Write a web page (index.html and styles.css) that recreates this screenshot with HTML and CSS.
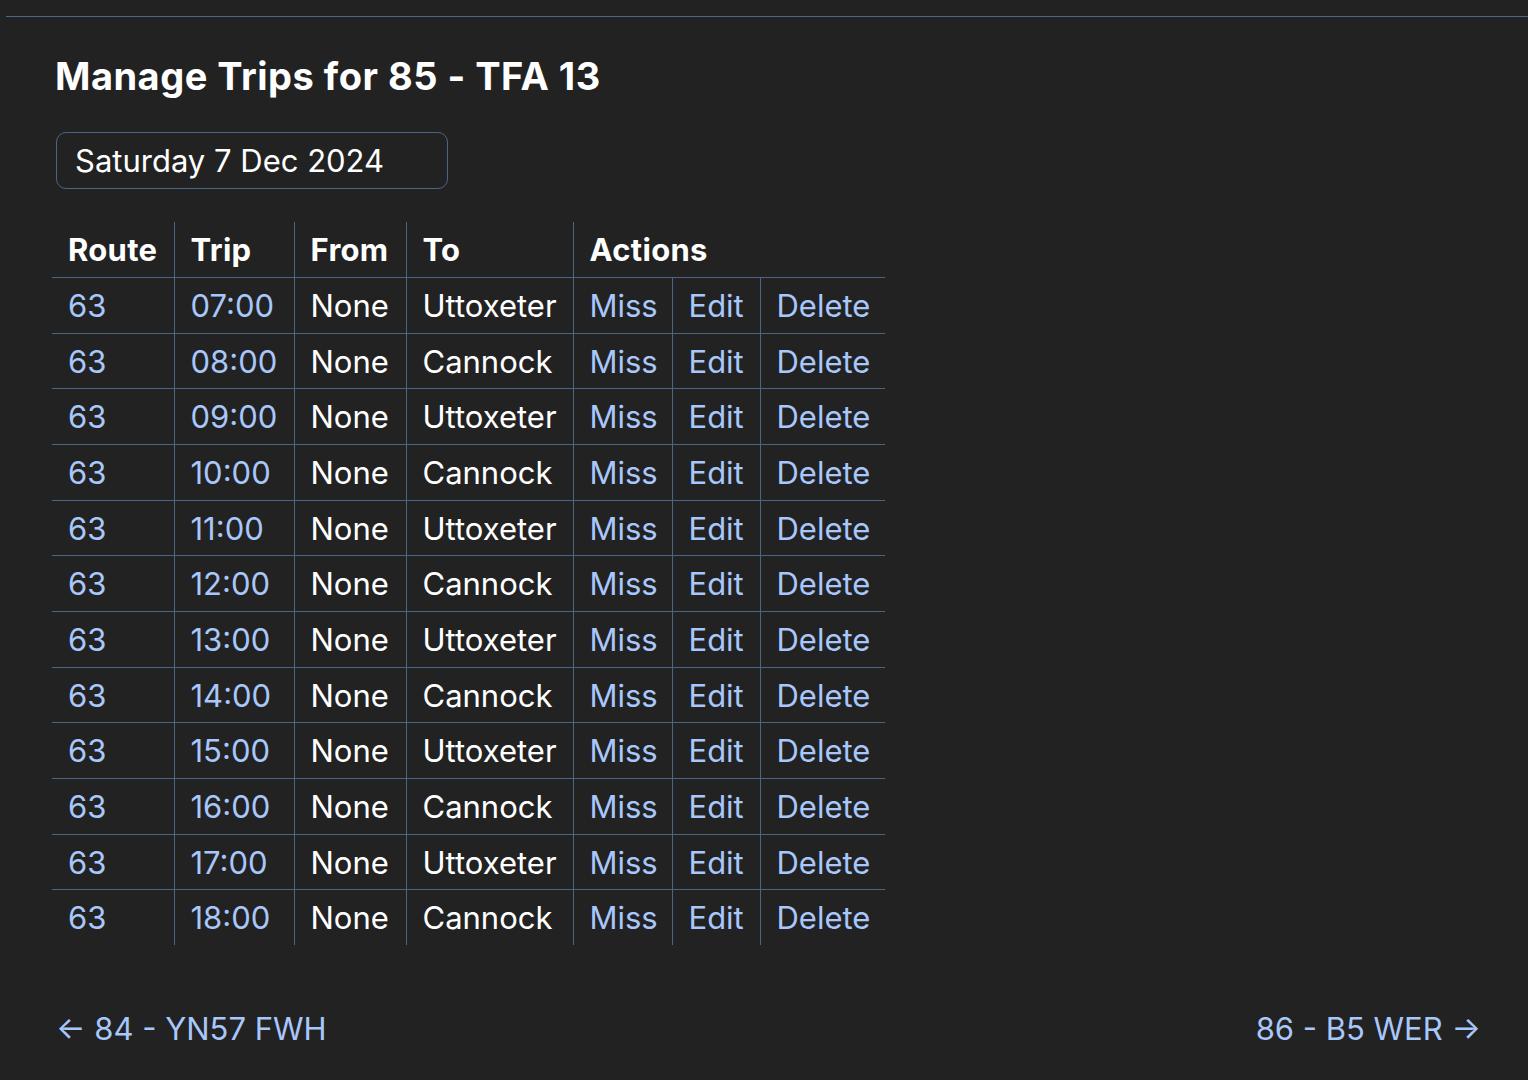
FILE: index.html
```html
<!DOCTYPE html>
<html lang="en">
<head>
<meta charset="utf-8">
<title>Manage Trips</title>
<link rel="stylesheet" href="styles.css">
</head>
<body>
<div class="page">
  <main class="content">
    <h1 class="title">Manage Trips for 85 - TFA 13</h1>
    <div class="date-field">Saturday 7 Dec 2024</div>
    <table class="trips">
      <colgroup>
        <col class="c-route"><col class="c-trip"><col class="c-from"><col class="c-to"><col class="c-miss"><col class="c-edit"><col class="c-delete">
      </colgroup>
      <thead>
        <tr><th>Route</th><th>Trip</th><th>From</th><th>To</th><th colspan="3">Actions</th></tr>
      </thead>
      <tbody>
        <tr><td><a href="#">63</a></td><td><a href="#">07:00</a></td><td>None</td><td>Uttoxeter</td><td><a href="#">Miss</a></td><td><a href="#">Edit</a></td><td><a href="#">Delete</a></td></tr>
        <tr><td><a href="#">63</a></td><td><a href="#">08:00</a></td><td>None</td><td>Cannock</td><td><a href="#">Miss</a></td><td><a href="#">Edit</a></td><td><a href="#">Delete</a></td></tr>
        <tr><td><a href="#">63</a></td><td><a href="#">09:00</a></td><td>None</td><td>Uttoxeter</td><td><a href="#">Miss</a></td><td><a href="#">Edit</a></td><td><a href="#">Delete</a></td></tr>
        <tr><td><a href="#">63</a></td><td><a href="#">10:00</a></td><td>None</td><td>Cannock</td><td><a href="#">Miss</a></td><td><a href="#">Edit</a></td><td><a href="#">Delete</a></td></tr>
        <tr><td><a href="#">63</a></td><td><a href="#">11:00</a></td><td>None</td><td>Uttoxeter</td><td><a href="#">Miss</a></td><td><a href="#">Edit</a></td><td><a href="#">Delete</a></td></tr>
        <tr><td><a href="#">63</a></td><td><a href="#">12:00</a></td><td>None</td><td>Cannock</td><td><a href="#">Miss</a></td><td><a href="#">Edit</a></td><td><a href="#">Delete</a></td></tr>
        <tr><td><a href="#">63</a></td><td><a href="#">13:00</a></td><td>None</td><td>Uttoxeter</td><td><a href="#">Miss</a></td><td><a href="#">Edit</a></td><td><a href="#">Delete</a></td></tr>
        <tr><td><a href="#">63</a></td><td><a href="#">14:00</a></td><td>None</td><td>Cannock</td><td><a href="#">Miss</a></td><td><a href="#">Edit</a></td><td><a href="#">Delete</a></td></tr>
        <tr><td><a href="#">63</a></td><td><a href="#">15:00</a></td><td>None</td><td>Uttoxeter</td><td><a href="#">Miss</a></td><td><a href="#">Edit</a></td><td><a href="#">Delete</a></td></tr>
        <tr><td><a href="#">63</a></td><td><a href="#">16:00</a></td><td>None</td><td>Cannock</td><td><a href="#">Miss</a></td><td><a href="#">Edit</a></td><td><a href="#">Delete</a></td></tr>
        <tr><td><a href="#">63</a></td><td><a href="#">17:00</a></td><td>None</td><td>Uttoxeter</td><td><a href="#">Miss</a></td><td><a href="#">Edit</a></td><td><a href="#">Delete</a></td></tr>
        <tr><td><a href="#">63</a></td><td><a href="#">18:00</a></td><td>None</td><td>Cannock</td><td><a href="#">Miss</a></td><td><a href="#">Edit</a></td><td><a href="#">Delete</a></td></tr>
      </tbody>
    </table>
    <nav class="pager">
      <a href="#" class="pager-link">← 84 - YN57 FWH</a>
      <a href="#" class="pager-link">86 - B5 WER →</a>
    </nav>
  </main>
</div>
</body>
</html>
```
FILE: styles.css
```css
html, body {
  margin: 0;
  padding: 0;
  background: #222222;
  color: #ffffff;
  font-family: Inter, "Noto Sans", "Liberation Sans", sans-serif;
}

.page {
  margin: 16px 0 0 6px;
  border-top: 1px solid #4a6684;
  min-height: 1063px;
  box-sizing: border-box;
}

.content {
  padding: 37px 47px 0 46px;
}

.title {
  margin: 0 0 34px 3px;
  font-size: 38px;
  font-weight: 700;
  letter-spacing: 0.5px;
  line-height: 44px;
}

.date-field {
  width: 392px;
  height: 57px;
  box-sizing: border-box;
  margin-left: 4px;
  border: 1px solid #4a6684;
  border-radius: 10px;
  padding: 0 18px;
  font-size: 31px;
  line-height: 55px;
}

.trips {
  margin-top: 33px;
  border-collapse: collapse;
  table-layout: fixed;
  width: 833px;
  font-size: 31px;
}

.c-route { width: 122px; }
.c-trip { width: 120px; }
.c-from { width: 112px; }
.c-to { width: 167px; }
.c-miss { width: 99px; }
.c-edit { width: 88px; }
.c-delete { width: 125px; }

.trips th,
.trips td {
  padding: 9px 16px;
  line-height: 37px;
  text-align: left;
  border-left: 1px solid #4a6684;
  white-space: nowrap;
}

.trips th:first-child,
.trips td:first-child {
  border-left: none;
}

.trips th {
  font-weight: 700;
  letter-spacing: 0.3px;
}

.trips tbody tr td {
  border-top: 1px solid #4a6684;
  padding: 9px 16px 8.67px;
}

a {
  color: #a8c7fa;
  text-decoration: none;
}

.pager {
  display: flex;
  justify-content: space-between;
  margin-top: 66px;
  font-size: 31px;
  line-height: 36px;
}

.pager-link {
  margin-left: 4px;
}
```
